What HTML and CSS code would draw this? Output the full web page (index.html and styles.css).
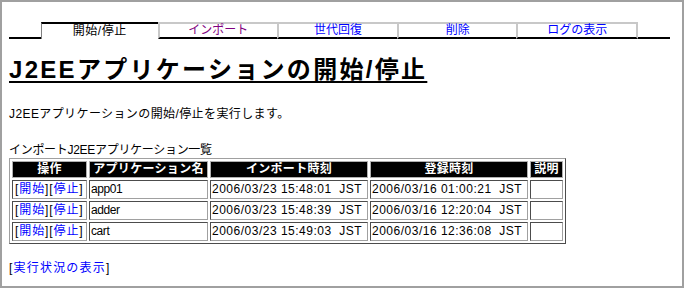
FILE: index.html
```html
<!DOCTYPE html>
<html lang="ja">
<head>
<meta charset="utf-8">
<title>J2EEアプリケーションの開始/停止</title>
<link rel="stylesheet" href="styles.css">
</head>
<body>
<div class="frame">
  <div class="tabs">
    <div class="tab-edge"></div>
    <div class="tab active">開始/停止</div>
    <div class="tab"><a class="visited" href="#">インポート</a></div>
    <div class="tab"><a href="#">世代回復</a></div>
    <div class="tab"><a href="#">削除</a></div>
    <div class="tab last"><a href="#">ログの表示</a></div>
    <div class="tab-edge"></div>
  </div>

  <h1 class="title">J2EEアプリケーションの開始/停止</h1>
  <p class="lead">J2EEアプリケーションの開始/停止を実行します。</p>

  <div class="caption">インポートJ2EEアプリケーション一覧</div>
  <table class="apps">
    <colgroup>
      <col class="c-op"><col class="c-name"><col class="c-imp"><col class="c-reg"><col class="c-desc">
    </colgroup>
    <thead>
      <tr><th>操作</th><th>アプリケーション名</th><th>インポート時刻</th><th>登録時刻</th><th>説明</th></tr>
    </thead>
    <tbody>
      <tr>
        <td class="op">[<a href="#">開始</a>][<a href="#">停止</a>]</td>
        <td class="name">app01</td>
        <td class="date">2006/03/23 15:48:01&nbsp; JST</td>
        <td class="date">2006/03/16 01:00:21&nbsp; JST</td>
        <td></td>
      </tr>
      <tr>
        <td class="op">[<a href="#">開始</a>][<a href="#">停止</a>]</td>
        <td class="name">adder</td>
        <td class="date">2006/03/23 15:48:39&nbsp; JST</td>
        <td class="date">2006/03/16 12:20:04&nbsp; JST</td>
        <td></td>
      </tr>
      <tr>
        <td class="op">[<a href="#">開始</a>][<a href="#">停止</a>]</td>
        <td class="name">cart</td>
        <td class="date">2006/03/23 15:49:03&nbsp; JST</td>
        <td class="date">2006/03/16 12:36:08&nbsp; JST</td>
        <td></td>
      </tr>
    </tbody>
  </table>

  <div class="footer">[<a href="#">実行状況の表示</a>]</div>
</div>
</body>
</html>
```

FILE: styles.css
```css
html, body {
  margin: 0;
  padding: 0;
  background: #ffffff;
}

body {
  font-family: "Liberation Sans", "Noto Sans CJK JP", sans-serif;
  font-size: 12px;
  color: #000000;
}

a {
  color: #0000ff;
  text-decoration: none;
}

a.visited {
  color: #800080;
}

.frame {
  box-sizing: border-box;
  width: 684px;
  height: 288px;
  border: 2px solid #a0a0a0;
  padding: 0 0 0 7px;
}

/* tabs */
.tabs {
  display: flex;
  margin-top: 20px;
  width: 661px;
  height: 17px;
}

.tab-edge {
  width: 32px;
  border-bottom: 2px solid #000000;
}

.tab {
  box-sizing: border-box;
  width: 120px;
  height: 17px;
  border-top: 2px solid #c8c8c8;
  border-left: 2px solid #c8c8c8;
  border-bottom: 2px solid #000000;
  text-align: center;
  line-height: 13px;
}

.tab.last {
  border-right: 2px solid #c8c8c8;
  width: 122px;
}

.tab.active {
  width: 117px;
  border-top: 2px solid #000000;
  border-left: 1px solid #808080;
  border-bottom: none;
  line-height: 15px;
  letter-spacing: 0.5px;
}

/* heading */
.title {
  margin: 16px 0 0 0;
  font-size: 24px;
  line-height: 30px;
  font-weight: bold;
  letter-spacing: 2.3px;
  text-decoration: underline;
  text-decoration-thickness: 2px;
  text-underline-offset: 3px;
}

.lead {
  margin: 21px 0 0 0;
  line-height: 16px;
  letter-spacing: 0.4px;
}

.caption {
  margin-top: 20px;
  line-height: 16px;
  letter-spacing: -0.3px;
}

/* table */
.apps {
  table-layout: fixed;
  width: 557px;
  border: 1px outset #a0a0a0;
  border-spacing: 2px;
}

.c-op { width: 75px; }
.c-name { width: 119px; }
.c-imp { width: 158px; }
.c-reg { width: 158px; }
.c-desc { width: 33px; }

.apps th,
.apps td {
  box-sizing: border-box;
  padding: 0 1px;
  white-space: nowrap;
  overflow: hidden;
}

.apps th {
  height: 17px;
  background: #000000;
  color: #ffffff;
  font-weight: bold;
  text-align: center;
  border: 1px solid #b0b0b0;
  line-height: 15px;
  letter-spacing: 0.3px;
}

.apps td {
  height: 19px;
  border: 1px inset #a0a0a0;
  text-align: left;
  line-height: 17px;
}

.apps td.op {
  padding-left: 2px;
  letter-spacing: 0.9px;
}

.apps td.name {
  letter-spacing: -0.4px;
}

.apps td.date {
  letter-spacing: 0.5px;
}

.footer {
  margin-top: 16px;
  line-height: 16px;
  letter-spacing: 1.2px;
}
```
